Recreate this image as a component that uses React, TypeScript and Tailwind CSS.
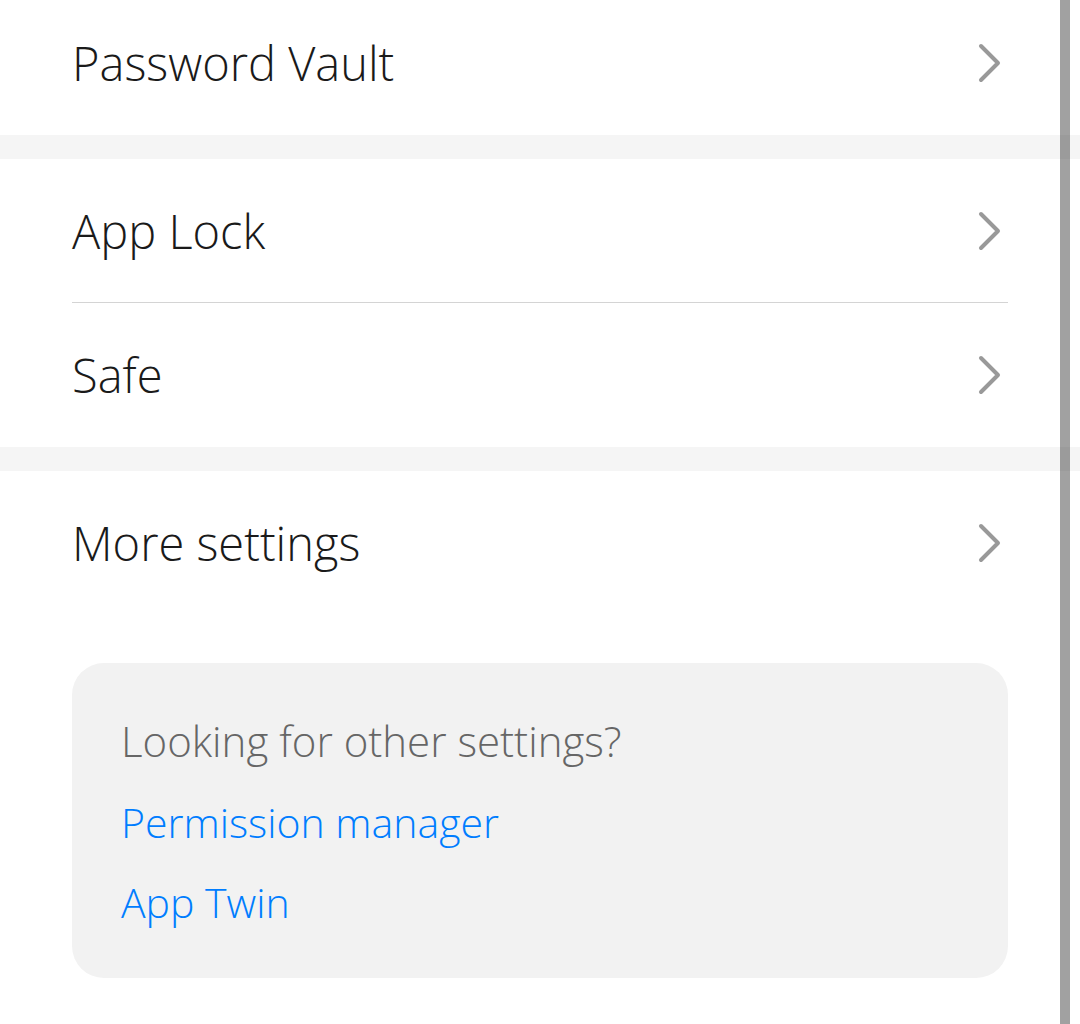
import React from 'react';

const Chevron = () => (
  <svg width="24" height="40" viewBox="0 0 24 40" fill="none" className="shrink-0">
    <path d="M3 3 L20 20 L3 37" stroke="#999999" strokeWidth="4" strokeLinecap="round" strokeLinejoin="round" />
  </svg>
);

const Row = ({ label, divider = false, className = '' }: { label: string; divider?: boolean; className?: string }) => (
  <div className={`relative flex h-[144px] items-center justify-between pl-[72px] pr-[78px] ${className}`}>
    <span className="text-[47px] font-light text-[#1a1a1a]">{label}</span>
    <Chevron />
    {divider && <div className="absolute bottom-0 left-[72px] right-[72px] h-px bg-[#d4d4d4]" />}
  </div>
);

const Band = () => <div className="h-[24px] bg-[#f5f5f5]" />;

export default function App() {
  return (
    <div
      className="relative h-[1024px] w-[1080px] overflow-hidden bg-white"
      style={{ fontFamily: '"Open Sans", "Noto Sans", sans-serif' }}
    >
      <Row label="Password Vault" className="-mt-[9px]" />
      <Band />
      <Row label="App Lock" divider />
      <Row label="Safe" />
      <Band />
      <Row label="More settings" />

      <div className="mx-[72px] mt-[48px] rounded-[32px] bg-[#f2f2f2] px-[49px] pt-[50px] pb-[48px]">
        <p className="text-[42px] font-light leading-[56px] text-[#666666]">Looking for other settings?</p>
        <p className="mt-[25px] text-[41px] font-light leading-[56px] text-[#007dff]">Permission manager</p>
        <p className="mt-[24px] text-[41px] font-light leading-[56px] text-[#007dff]">App Twin</p>
      </div>

      {/* scrollbar */}
      <div className="absolute right-[10px] top-0 h-full w-[10px] bg-[rgba(0,0,0,0.37)]" />
    </div>
  );
}
